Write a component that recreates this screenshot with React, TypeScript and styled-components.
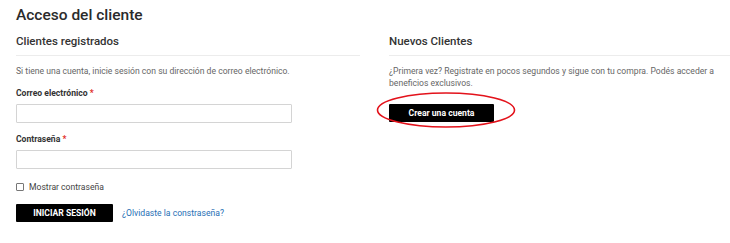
import styled, { createGlobalStyle } from "styled-components";

const GlobalStyle = createGlobalStyle`
  * { box-sizing: border-box; }
  body {
    margin: 0;
    background: #ffffff;
    font-family: Roboto, "Liberation Sans", sans-serif;
    color: #333333;
  }
`;

const App = () => {
  return (
    <Page>
      <GlobalStyle />
      <Title>Acceso del cliente</Title>
      <Columns>
        <Column>
          <BlockTitle>Clientes registrados</BlockTitle>
          <Note>
            Si tiene una cuenta, inicie sesión con su dirección de correo
            electrónico.
          </Note>
          <Field>
            <Label>
              Correo electrónico <Required>*</Required>
            </Label>
            <Input type="email" />
          </Field>
          <Field>
            <Label>
              Contraseña <Required>*</Required>
            </Label>
            <Input type="password" />
          </Field>
          <CheckRow>
            <Check type="checkbox" />
            <span>Mostrar contraseña</span>
          </CheckRow>
          <Actions>
            <PrimaryButton>INICIAR SESIÓN</PrimaryButton>
            <Link href="#">¿Olvidaste la constraseña?</Link>
          </Actions>
        </Column>
        <Column>
          <BlockTitle>Nuevos Clientes</BlockTitle>
          <Note>
            ¿Primera vez? Registrate en pocos segundos y sigue con tu compra.
            Podés acceder a beneficios exclusivos.
          </Note>
          <Highlight>
            <PrimaryButton $width={105}>Crear una cuenta</PrimaryButton>
            <Ring viewBox="0 0 140 38">
              <ellipse
                cx="70"
                cy="19"
                rx="68.5"
                ry="17"
                fill="none"
                stroke="#e3121b"
                strokeWidth="1.6"
              />
            </Ring>
          </Highlight>
        </Column>
      </Columns>
    </Page>
  );
};

export default App;

const Page = styled.main`
  width: 730px;
  height: 243px;
  padding: 5px 0 0 16px;
  overflow: hidden;
`;

const Title = styled.h1`
  margin: 0;
  font-size: 15.5px;
  font-weight: 500;
  line-height: 20px;
  color: #2b2b2b;
`;

const Columns = styled.div`
  display: grid;
  grid-template-columns: 344px 1fr;
  column-gap: 29px;
  margin-top: 9px;
`;

const Column = styled.section`
  display: flex;
  flex-direction: column;
`;

const BlockTitle = styled.h2`
  margin: 0;
  padding-bottom: 7px;
  font-size: 11.5px;
  font-weight: 500;
  line-height: 14px;
  color: #333;
  border-bottom: 1px solid #ececec;
`;

const Note = styled.p`
  margin: 9px 0 0;
  font-size: 8.6px;
  line-height: 12px;
  color: #666;
`;

const Field = styled.div`
  display: flex;
  flex-direction: column;
  margin-top: 10px;
`;

const Label = styled.label`
  font-size: 8.6px;
  font-weight: 700;
  line-height: 12px;
  color: #333;
  margin-bottom: 5px;
`;

const Required = styled.span`
  color: #e02b27;
`;

const Input = styled.input`
  width: 276px;
  height: 19px;
  border: 1px solid #d4d4d4;
  border-radius: 1px;
  background: #fff;
  outline: none;
`;

const CheckRow = styled.label`
  display: flex;
  align-items: center;
  gap: 5px;
  margin-top: 13px;
  font-size: 8.6px;
  color: #444;
`;

const Check = styled.input`
  appearance: none;
  margin: 0;
  width: 8px;
  height: 8px;
  border: 1px solid #777;
  border-radius: 1px;
  background: #fff;
`;

const Actions = styled.div`
  display: flex;
  align-items: center;
  gap: 9px;
  margin-top: 12px;
`;

const PrimaryButton = styled.button<{ $width?: number }>`
  width: ${({ $width }) => ($width ? `${$width}px` : "97px")};
  height: 18px;
  padding: 0;
  border: none;
  border-radius: 1px;
  background: #000;
  color: #fff;
  font-family: inherit;
  font-size: 8.6px;
  font-weight: 700;
  cursor: pointer;
`;

const Link = styled.a`
  font-size: 8.6px;
  color: #1f6fb5;
  text-decoration: none;
`;

const Highlight = styled.div`
  position: relative;
  align-self: flex-start;
  margin-top: 12px;
`;

const Ring = styled.svg`
  position: absolute;
  left: -13px;
  top: -10px;
  width: 140px;
  height: 38px;
  pointer-events: none;
`;
